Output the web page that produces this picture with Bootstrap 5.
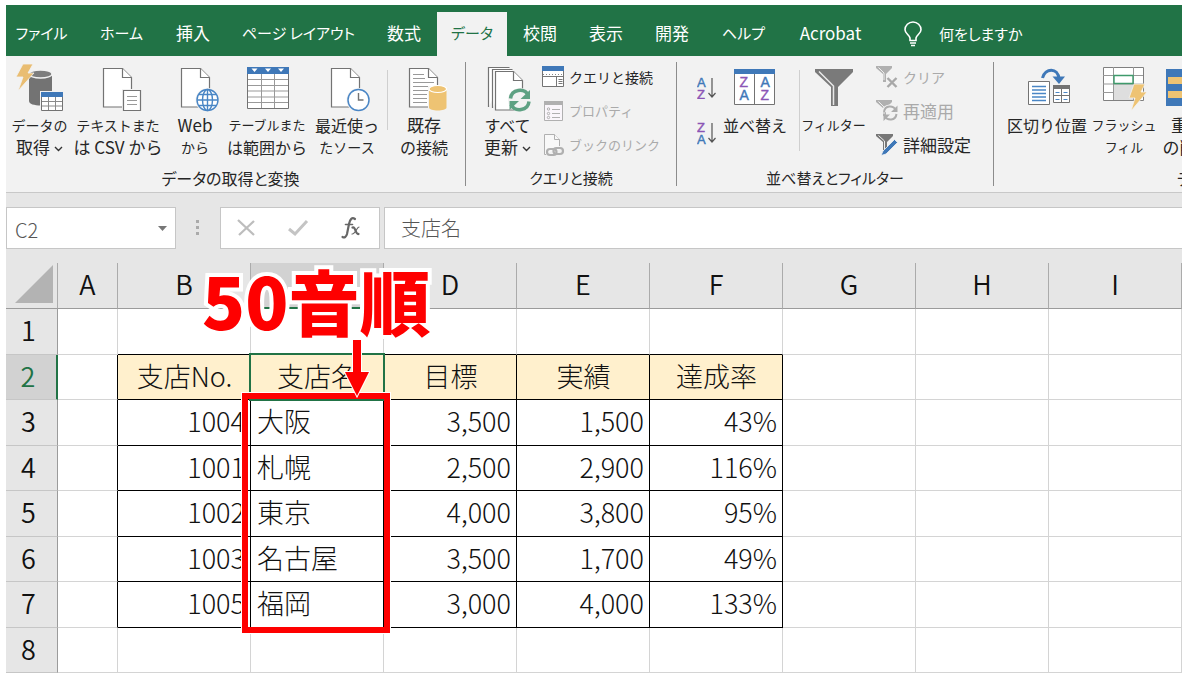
<!DOCTYPE html>
<html lang="ja">
<head>
<meta charset="utf-8">
<meta name="viewport" content="width=device-width, initial-scale=1">
<title>Excel - データ</title>
<link href="https://cdn.jsdelivr.net/npm/bootstrap@5.3.0/dist/css/bootstrap.min.css" rel="stylesheet">
<style>
  :root { --xl-green: #217346; --xl-ribbon: #f2f2f2; --xl-chrome: #e6e6e6; --xl-red: #fe0000; }
  body { font-family: "Noto Sans CJK JP", sans-serif; background: #fff; color: #262626; overflow: hidden; }
  .xl-app { padding: 5px 7px 0 6px; }

  /* tabs */
  .xl-tabs { background: var(--xl-green); height: 51px; padding-top: 7px; }
  .xl-tabs a { color: #fff; font-size: 17px; line-height: 42px; text-align: center; font-feature-settings: "palt"; text-decoration: none; white-space: nowrap; flex-shrink: 0; }
  .xl-tabs a:first-child { padding-right: 6px; }
  .xl-tabs a.active { background: var(--xl-ribbon); color: var(--xl-green); }
  .xl-tabs a.kana { font-size: 15px; }
  .w-tab-s { width: 66px; }
  .w-tab-d { width: 70px; }
  .w-tab-m { width: 77px; }
  .w-tab-l { width: 97px; }
  .w-tab-xl { width: 145px; }

  /* ribbon */
  .xl-ribbon { background: var(--xl-ribbon); height: 137px; border-bottom: 1px solid #c8c8c8; font-feature-settings: "palt"; font-size: 17px; line-height: 22px; }
  .xl-group { margin: 6px 0 6px; border-right: 1px solid #8c8c8c; padding-top: 2px; }
  .xl-group .xl-label { font-size: 16px; text-align: center; margin-top: auto; margin-bottom: -3px; }
  .g-get { width: 460px; } .g-query { width: 211px; } .g-sort { width: 317px; } .g-tools { width: 460px; border: 0; }
  .g-get .xl-label { padding-right: 10px; }
  .xl-sep { width: 1px; background: #cfcfcf; height: 60px; margin-top: 6px; }
  .xl-sep-tall { height: 81px; }
  .xl-big { background: none; border: 0; padding: 0; color: inherit; white-space: nowrap; display: flex; flex-direction: column; align-items: center; flex-shrink: 0; }
  .xl-big > svg { margin-bottom: 2px; }
  .b-64 { width: 64px; } .b-67 { width: 67px; } .b-72 { width: 72px; } .b-80 { width: 80px; } .b-90 { width: 90px; }
  .xl-ribbon .mixed { font-size: 16px; }
  .xl-ribbon .xl-label.kana { font-size: 15px; }
  .xl-ribbon .kana { font-size: 14px; }
  .xl-ribbon .kana-s { font-size: 13px; }
  .xl-stack { margin-top: -4px; }
  .xl-az { padding-top: 11px; gap: 21px; }
  .xl-small { background: none; border: 0; padding: 0; height: 34px; color: inherit; white-space: nowrap; display: flex; align-items: center; gap: 4px; }
  .xl-small:disabled { color: #aaa; }
  svg { display: block; flex-shrink: 0; }
  svg text { font-family: "Liberation Sans", sans-serif; }

  /* formula bar */
  .xl-bar { background: var(--xl-chrome); padding: 14px 0; }
  .xl-field { background: #fff; border: 1px solid #c6c6c6; height: 42px; }
  .xl-field input { border: 0; background: transparent; outline: 0; color: #555; font-size: 20px; font-weight: 300; padding: 0; min-width: 0; }
  .xl-field button { background: none; border: 0; padding: 0; }
  .xl-name { width: 170px; padding-left: 8px; }
  .xl-name input { width: 130px; margin-top: 3px; }
  .xl-fx { width: 160px; padding: 0 14px; }
  .xl-formula { padding-left: 16px; border-right: 0; }

  /* sheet */
  .xl-sheet { table-layout: fixed; width: 100%; border-collapse: separate; border-spacing: 0; font-size: 27px; line-height: 40px; font-weight: 300; color: #111; }
  .xl-sheet th { font-weight: 350; text-align: center; padding: 0 0 3px; background: var(--xl-chrome); }
  .xl-sheet thead th { height: 46px; border-right: 1px solid #ababab; border-bottom: 1px solid #9b9b9b; }
  .xl-sheet thead th.picked { background: #d2d2d2; color: var(--xl-green); border-bottom: 2px solid var(--xl-green); }
  .xl-sheet tbody tr { height: 46px; }
  .xl-sheet tbody tr:nth-child(even) { height: 45px; }
  .xl-sheet tbody th { border-right: 1px solid #9b9b9b; border-bottom: 1px solid #c6c6c6; padding-right: 6px; }
  .xl-sheet tbody th.picked { background: #d2d2d2; color: var(--xl-green); border-right: 2px solid var(--xl-green); }
  .xl-sheet td { padding: 0 5px 3px 6px; border-right: 1px solid #d4d4d4; border-bottom: 1px solid #d4d4d4; text-align: right; position: relative; white-space: nowrap; }
  .xl-sheet .edge-b { border-bottom-color: #000; }
  .xl-sheet .edge-r { border-right-color: #000; }
  .xl-sheet .box td:nth-child(n+3):nth-child(-n+7) { border-color: #000; }
  .xl-sheet .heads td:nth-child(n+3):nth-child(-n+7) { background: #fff0cd; text-align: center; }
  .xl-sheet .box:not(.heads) td:nth-child(4) { text-align: left; }
  .col-num { width: 52px; } .col-a { width: 60px; }

  /* marks over the sheet */
  .xl-cursor { position: absolute; inset: -2px -2px -2px -2px; border: 2px solid var(--xl-green); pointer-events: none; z-index: 1; }
  .note-box { position: absolute; left: -9px; right: -7px; top: -7px; height: 240px; border: 6px solid var(--xl-red); outline: 1px solid #fff; pointer-events: none; z-index: 2; }
  .note-text { position: absolute; left: -46px; top: -140px; color: var(--xl-red); font-size: 71px; line-height: 80px; font-weight: 900; -webkit-text-stroke: 8px #fff; paint-order: stroke fill; }
  .note-arrow { position: absolute; left: 96px; top: -60px; }
</style>
</head>
<body>
<div class="xl-app">
  <nav class="xl-tabs d-flex overflow-hidden">
    <a href="#" class="w-tab-m kana">ファイル</a>
    <a href="#" class="w-tab-m kana">ホーム</a>
    <a href="#" class="w-tab-s">挿入</a>
    <a href="#" class="w-tab-xl kana">ページ レイアウト</a>
    <a href="#" class="w-tab-s">数式</a>
    <a href="#" class="w-tab-d active kana">データ</a>
    <a href="#" class="w-tab-s">校閲</a>
    <a href="#" class="w-tab-s">表示</a>
    <a href="#" class="w-tab-s">開発</a>
    <a href="#" class="w-tab-m kana">ヘルプ</a>
    <a href="#" class="w-tab-l">Acrobat</a>
    <a href="#" class="d-flex align-items-center gap-3 ps-4 kana">
      <svg width="20" height="26" viewBox="0 0 20 26" fill="none" stroke="#fff" stroke-width="1.6"><path d="M7 19.500v-2.500C6.500 14 2 12.500 2 8.800a8 7.800 0 0 1 16 0c0 3.700-4.500 5.200-5 8.200v2.500zM7 22h6M8 24.500h4"/></svg>
      <span>何をしますか</span>
    </a>
  </nav>

  <div class="xl-ribbon d-flex overflow-hidden">
    <section class="xl-group g-get d-flex flex-column flex-shrink-0">
      <div class="d-flex">
        <button class="xl-big b-67" type="button">
          <svg width="48" height="48" viewBox="0 0 48 48"><path d="M13 10v27c0 3 5 4.500 12 4.500s11-1.500 11-4.500V10z" fill="#737373"/><ellipse cx="24.500" cy="10" rx="11.500" ry="4" fill="#7d7d7d" stroke="#f2f2f2" stroke-width="1.300"/><path d="M7 0h10l-5 9h6L2 27l5-14H0z" fill="#e9bd72" stroke="#f2f2f2" stroke-width=".8"/><path d="M24 27h24v21H24z" fill="#f2f2f2"/><path d="M25.500 28.500h21v18h-21z" fill="#fff" stroke="#737373"/><path d="M25 28h22v5H25z" fill="#3f78b8"/><path d="M26 37.500h20M26 42h20M32.500 33v13M39.500 33v13" stroke="#8a8a8a"/></svg>
          <span class="kana">データの</span><span>取得 <svg class="d-inline" width="9" height="6" viewBox="0 0 9 6"><path d="M1 1l3.500 3.500L8 1" fill="none" stroke="#333" stroke-width="1.400"/></svg></span>
        </button>
        <button class="xl-big b-90" type="button">
          <svg width="48" height="48" viewBox="0 0 48 48" fill="#fff" stroke="#737373" stroke-width="1.200"><path d="M9.500 4.500h19l9 9V43h-28z"/><path d="M28.500 4.500v9h9"/><path d="M28 25h20v23H28z" fill="#f2f2f2" stroke="none"/><path d="M29.500 26.500h17v20h-17z"/><path d="M33 32.500h10M33 36.500h10M33 40.500h10" stroke="#999"/></svg>
          <span class="kana">テキストまた</span><span>は CSV から</span>
        </button>
        <button class="xl-big b-64" type="button">
          <svg width="48" height="48" viewBox="0 0 48 48" fill="#fff" stroke="#737373" stroke-width="1.200"><path d="M10.500 4.500h19l9 9V43h-28z"/><path d="M29.500 4.500v9h9"/><circle cx="36.500" cy="36" r="12" fill="#f2f2f2" stroke="none"/><g stroke="#4a86c5" stroke-width="1.400"><circle cx="36.500" cy="36" r="10.500"/><ellipse cx="36.500" cy="36" rx="5" ry="10.500"/><path d="M36.500 25.500v21M26 36h21M28 30.500h17M28 41.500h17"/></g></svg>
          <span>Web</span><span class="kana">から</span>
        </button>
        <button class="xl-big b-80" type="button">
          <svg width="48" height="48" viewBox="0 0 48 48"><path d="M4.500 3.500h41v41h-41z" fill="#fff" stroke="#737373"/><path d="M4 3h42v7H4z" fill="#3f78b8"/><path d="M8.500 4.500h6l-3 3.500zM22 4.500h6l-3 3.500zM35 4.500h6l-3 3.500z" fill="#fff"/><path d="M5 15.500h40M5 21.500h40M5 27h40M5 33h40M5 38.500h40M18.500 10v34M31.500 10v34" stroke="#999"/></svg>
          <span class="kana-s">テーブルまた</span><span class="mixed">は範囲から</span>
        </button>
        <button class="xl-big b-80" type="button">
          <svg width="48" height="48" viewBox="0 0 48 48" fill="#fff" stroke="#737373" stroke-width="1.200"><path d="M8.500 4.500h19l9 9V43h-28z"/><path d="M27.500 4.500v9h9"/><circle cx="35.500" cy="36" r="12" fill="#f2f2f2" stroke="none"/><circle cx="35.500" cy="36" r="10.500" stroke="#4a86c5" stroke-width="1.500"/><path d="M35.500 29v7h5" fill="none" stroke-width="1.400"/></svg>
          <span class="mixed">最近使っ</span><span class="kana">たソース</span>
        </button>
        <div class="xl-sep"></div>
        <button class="xl-big b-72" type="button">
          <svg width="48" height="48" viewBox="0 0 48 48" fill="#fff" stroke="#737373" stroke-width="1.200"><path d="M9.500 4.500h19l9 9V43h-28z"/><path d="M28.500 4.500v9h9"/><path d="M13 10.500h11M13 14.500h12M13 18.500h21M13 22.500h21M13 26.500h16M13 30.500h14M13 34.500h14M13 38.500h14" stroke="#999"/><path d="M28 22h20v26H28z" fill="#f2f2f2" stroke="none"/><path d="M29 25v18.500c0 4 17.500 4 17.500 0V25z" fill="#eec373" stroke="none"/><ellipse cx="37.800" cy="25" rx="8.800" ry="3.500" fill="#eec373" stroke="#fff"/></svg>
          <span>既存</span><span class="mixed">の接続</span>
        </button>
      </div>
      <div class="xl-label">データの取得と変換</div>
    </section>

    <section class="xl-group g-query d-flex flex-column flex-shrink-0">
      <div class="d-flex ps-2">
        <button class="xl-big b-67" type="button">
          <svg width="48" height="48" viewBox="0 0 48 48" fill="#fff" stroke="#737373" stroke-width="1.200"><path d="M4.500 43V3.500h21"/><path d="M8.500 44V5.500h20"/><path d="M11.500 7.500h18l9 9V46h-27z"/><path d="M29.500 7.500v9h9"/><circle cx="36" cy="36" r="12" fill="#f2f2f2" stroke="none"/><path d="M26.500 34.500c1-9.500 14-11 18-3M45 37.500c-1 9.500-14 11-18 3" fill="none" stroke="#5ea183" stroke-width="3.500"/><path d="M46 26v9h-9.500zM25.500 46v-9h9.500z" fill="#5ea183" stroke="none"/></svg>
          <span class="mixed">すべて</span><span>更新 <svg class="d-inline" width="9" height="6" viewBox="0 0 9 6"><path d="M1 1l3.500 3.500L8 1" fill="none" stroke="#333" stroke-width="1.400"/></svg></span>
        </button>
        <div class="xl-stack">
          <button class="xl-small kana" type="button">
            <svg width="24" height="24" viewBox="0 0 24 24"><path d="M1.500 1.500h21v20h-21z" fill="#fff" stroke="#737373"/><path d="M1 1h22v5H1z" fill="#3f78b8"/><path d="M2 9.500h20" stroke="#888" stroke-dasharray="1 2"/><path d="M15.500 11v10M2 11.500h20M17.500 14.500h4M17.500 16.500h4M17.500 18.500h4" stroke="#777"/></svg>クエリと接続</button>
          <button class="xl-small kana-s" type="button" disabled>
            <svg width="24" height="24" viewBox="0 0 24 24" fill="#faf6fb" stroke="#b0b0b0"><path d="M3.500 2.500h18v19h-18z"/><path d="M3 2h19v4H3z" fill="#b0b0b0" stroke="none"/><path d="M11 10.500h8M11 14.500h8M11 18.500h8"/><circle cx="7.500" cy="10" r="1.200"/><circle cx="7.500" cy="14.500" r="1.200"/><circle cx="7.500" cy="18.500" r="1.200"/></svg>プロパティ</button>
          <button class="xl-small kana-s" type="button" disabled>
            <svg width="24" height="24" viewBox="0 0 24 24" fill="#f8f8f8" stroke="#b0b0b0"><path d="M5 21.500H3.500v-20h10l5 5V13"/><path d="M13.500 1.500v5h5" /><g fill="none" stroke-width="2.200"><rect x="6" y="16" width="9.500" height="6" rx="3"/><rect x="12.500" y="15" width="9.500" height="6" rx="3"/></g></svg>ブックのリンク</button>
        </div>
      </div>
      <div class="xl-label kana">クエリと接続</div>
    </section>

    <section class="xl-group g-sort d-flex flex-column flex-shrink-0">
      <div class="d-flex ps-3">
        <div class="xl-az d-flex flex-column ps-1">
          <button class="xl-big" type="button" aria-label="昇順"><svg width="22" height="24" viewBox="0 0 22 24" font-size="13"><text x="0" y="12" fill="#3f78b8" stroke="#3f78b8" stroke-width=".4">A</text><text x="0" y="24" fill="#8b55b5" stroke="#8b55b5" stroke-width=".4">Z</text><path d="M15 3v19M11.500 18l3.500 4 3.500-4" fill="none" stroke="#555" stroke-width="1.200"/></svg></button>
          <button class="xl-big" type="button" aria-label="降順"><svg width="22" height="24" viewBox="0 0 22 24" font-size="13"><text x="0" y="10" fill="#8b55b5" stroke="#8b55b5" stroke-width=".4">Z</text><text x="0" y="22" fill="#3f78b8" stroke="#3f78b8" stroke-width=".4">A</text><path d="M15 1v19M11.500 16l3.500 4 3.500-4" fill="none" stroke="#555" stroke-width="1.200"/></svg></button>
        </div>
        <button class="xl-big b-72" type="button">
          <svg width="48" height="48" viewBox="0 0 48 48" font-size="14"><path d="M3.500 5.500h40v35h-40z" fill="#fff" stroke="#737373"/><path d="M3 5h41v5H3z" fill="#3f78b8"/><path d="M23.500 10v30" stroke="#737373"/><g fill="#8b55b5" stroke="#8b55b5" stroke-width=".4"><text x="8.500" y="23">Z</text><text x="29.500" y="36">Z</text></g><g fill="#3f78b8" stroke="#3f78b8" stroke-width=".4"><text x="8.500" y="36">A</text><text x="29.500" y="23">A</text></g></svg>
          <span class="mixed">並べ替え</span>
        </button>
        <div class="xl-sep xl-sep-tall ms-2"></div>
        <button class="xl-big b-67" type="button">
          <svg width="48" height="48" viewBox="0 0 48 48"><path d="M5 5h38v3L28 23v19h-7V23L5 8z" fill="#7a7a7a"/><path d="M9 7.500L23.500 22v19" fill="none" stroke="#e8e8e8" stroke-width="1.500"/></svg>
          <span class="kana-s">フィルター</span>
        </button>
        <div class="xl-stack ps-2">
          <button class="xl-small kana" type="button" disabled>
            <svg width="24" height="24" viewBox="0 0 24 24"><path d="M1 1h16v2l-6 6v8H8V9L1 3z" fill="#b0b0b0"/><path d="M3.500 2.500L9 8v7" fill="none" stroke="#eee"/><path d="M12.500 13l9 9M21.500 13l-9 9" stroke="#a8a8a8" stroke-width="2.400"/></svg>クリア</button>
          <button class="xl-small" type="button" disabled>
            <svg width="24" height="24" viewBox="0 0 24 24"><path d="M1 1h16v2l-6 6v8H8V9L1 3z" fill="#b0b0b0"/><path d="M3.500 2.500L9 8v7" fill="none" stroke="#eee"/><path d="M9 13c1-7 9-7 12-2M21.500 15c-1 7-9 7-12 2" fill="none" stroke="#f2f2f2" stroke-width="4"/><path d="M9 13c1-7 9-7 12-2M21.500 15c-1 7-9 7-12 2" fill="none" stroke="#adadad" stroke-width="2"/><path d="M22.500 6.500V13H16zM8.500 22v-6.500H15z" fill="#adadad"/></svg>再適用</button>
          <button class="xl-small" type="button">
            <svg width="24" height="24" viewBox="0 0 24 24"><path d="M1 1h17v2l-6 6v8H8V9L1 3z" fill="#777"/><path d="M3.500 2.500L9.500 8v8" fill="none" stroke="#eee"/><path d="M6 22.500l2-4.500L19.500 6.500l3 3L11 21z" fill="#3f78b8" stroke="#f2f2f2" stroke-width=".8"/></svg>詳細設定</button>
        </div>
      </div>
      <div class="xl-label kana">並べ替えとフィルター</div>
    </section>

    <section class="xl-group g-tools d-flex flex-column flex-shrink-0">
      <div class="d-flex ps-2">
        <button class="xl-big b-90" type="button">
          <svg width="48" height="48" viewBox="0 0 48 48"><path d="M5.500 17.500h21v23h-21z" fill="#fff" stroke="#737373"/><path d="M9 22.500h14M9 26h14M9 29.500h14M9 33h14M9 36.500h14" stroke="#4a86c5" stroke-width="1.400"/><path d="M30.500 22.500h16v16h-16z" fill="#fff" stroke="#737373"/><path d="M30 21h17v4H30z" fill="#737373"/><path d="M38.500 25v14M30 31.500h17" stroke="#737373"/><path d="M32.500 28.500h4M40.500 28.500h4M32.500 35.500h4M40.500 35.500h4" stroke="#4a86c5"/><path d="M19.500 14C22 4 35 3 36 15" fill="none" stroke="#3f78b8" stroke-width="3"/><path d="M29.500 12.500h12.500L36 20z" fill="#3f78b8"/></svg>
          <span class="mixed">区切り位置</span>
        </button>
        <button class="xl-big b-64" type="button">
          <svg width="48" height="48" viewBox="0 0 48 48"><path d="M3.500 3.500h40v33h-40z" fill="#fff" stroke="#808080"/><path d="M14 20h20v16H14z" fill="#dedede"/><path d="M3 11.500h40M3 20h40M3 28.500h10M13.500 3v33M33.500 3v33" stroke="#999"/><path d="M14 11.500h19v8H14z" fill="#fff" stroke="#3e9a6b" stroke-width="1.400"/><path d="M34 20h11l-4 8h6L31 47l4-13h-6z" fill="#eec373" stroke="#f2f2f2" stroke-width=".8"/></svg>
          <span class="kana-s">フラッシュ</span><span class="kana-s">フィル</span>
        </button>
        <button class="xl-big b-64" type="button">
          <svg width="48" height="48" viewBox="0 0 48 48"><path d="M2 5h44v37H2z" fill="#3f78b8"/><path d="M4 13h18v7H4zM4 27h18v7H4z" fill="#eec373"/></svg>
          <span>重複</span><span>の削除</span>
        </button>
      </div>
      <div class="xl-label">データ ツール</div>
    </section>
  </div>

  <div class="xl-bar d-flex align-items-center">
    <div class="xl-field xl-name d-flex align-items-center flex-shrink-0">
      <input type="text" value="C2" aria-label="名前ボックス">
      <button type="button" class="ms-auto me-2" aria-label="名前の一覧"><svg width="9" height="5" viewBox="0 0 9 5"><path d="M0 0h9L4.500 5z" fill="#777"/></svg></button>
    </div>
    <svg class="mx-3" width="12" height="16" viewBox="0 0 12 16"><path d="M4 0h3v3H4zM4 6h3v3H4zM4 12h3v3H4z" fill="#aaa"/></svg>
    <div class="xl-field xl-fx d-flex align-items-center justify-content-between flex-shrink-0">
      <button type="button" aria-label="キャンセル"><svg width="22" height="20" viewBox="0 0 22 20"><path d="M3 2l16 15M19 3L4 17" stroke="#bdbdbd" stroke-width="2.300" fill="none"/></svg></button>
      <button type="button" aria-label="入力"><svg width="22" height="20" viewBox="0 0 22 20"><path d="M2 11l6 5L20 3" stroke="#c4c4c4" stroke-width="3" fill="none"/></svg></button>
      <button type="button" aria-label="関数の挿入"><svg width="26" height="26" viewBox="0 0 26 26"><g fill="none" stroke="#666" stroke-linecap="round"><path d="M16 4c-3-2-5 0-6 5L8 19c-.8 3-2.500 4-4.500 3" stroke-width="2.200"/><path d="M6.500 9.500h7" stroke-width="1.600"/><path d="M13.500 12.500c3-1.500 3 7.500 6 6.500" stroke-width="2.200"/><path d="M20 12c-2 0-4 7.500-7 7" stroke-width="1.200"/></g></svg></button>
    </div>
    <div class="xl-field xl-formula d-flex align-items-center flex-grow-1 ms-1">
      <input type="text" class="w-100" value="支店名" aria-label="数式バー">
    </div>
  </div>

  <table class="xl-sheet">
    <colgroup><col class="col-num"><col class="col-a"><col><col><col><col><col><col><col><col></colgroup>
    <thead>
      <tr><th aria-label="すべて選択"><svg class="ms-auto me-1" width="38" height="38" viewBox="0 0 38 38"><path d="M38 0v38H0z" fill="#b3b3b3"/></svg></th><th>A</th><th>B</th><th class="picked">C</th><th>D</th><th>E</th><th>F</th><th>G</th><th>H</th><th>I</th></tr>
    </thead>
    <tbody>
      <tr><th>1</th><td></td><td class="edge-b"></td><td class="edge-b"></td><td class="edge-b"></td><td class="edge-b"></td><td class="edge-b"></td><td></td><td></td><td></td></tr>
      <tr class="box heads"><th class="picked">2</th><td class="edge-r"></td><td>支店No.</td><td>支店名<div class="xl-cursor"></div></td><td>目標</td><td>実績</td><td>達成率</td><td></td><td></td><td></td></tr>
      <tr class="box"><th>3</th><td class="edge-r"></td><td>1004</td><td>大阪
        <div class="note-box">
          <span class="note-text">50音順</span>
          <svg class="note-arrow" width="26" height="60" viewBox="0 0 26 60"><path d="M9 1h8v32h8L13 57 1 33h8z" fill="#fe0000" stroke="#fff" stroke-width="2" paint-order="stroke"/></svg>
        </div>
        </td><td>3,500</td><td>1,500</td><td>43%</td><td></td><td></td><td></td></tr>
      <tr class="box"><th>4</th><td class="edge-r"></td><td>1001</td><td>札幌</td><td>2,500</td><td>2,900</td><td>116%</td><td></td><td></td><td></td></tr>
      <tr class="box"><th>5</th><td class="edge-r"></td><td>1002</td><td>東京</td><td>4,000</td><td>3,800</td><td>95%</td><td></td><td></td><td></td></tr>
      <tr class="box"><th>6</th><td class="edge-r"></td><td>1003</td><td>名古屋</td><td>3,500</td><td>1,700</td><td>49%</td><td></td><td></td><td></td></tr>
      <tr class="box"><th>7</th><td class="edge-r"></td><td>1005</td><td>福岡</td><td>3,000</td><td>4,000</td><td>133%</td><td></td><td></td><td></td></tr>
      <tr><th>8</th><td></td><td></td><td></td><td></td><td></td><td></td><td></td><td></td><td></td></tr>
    </tbody>
  </table>
</div>
<script src="https://cdn.jsdelivr.net/npm/bootstrap@5.3.0/dist/js/bootstrap.bundle.min.js"></script>
</body>
</html>
